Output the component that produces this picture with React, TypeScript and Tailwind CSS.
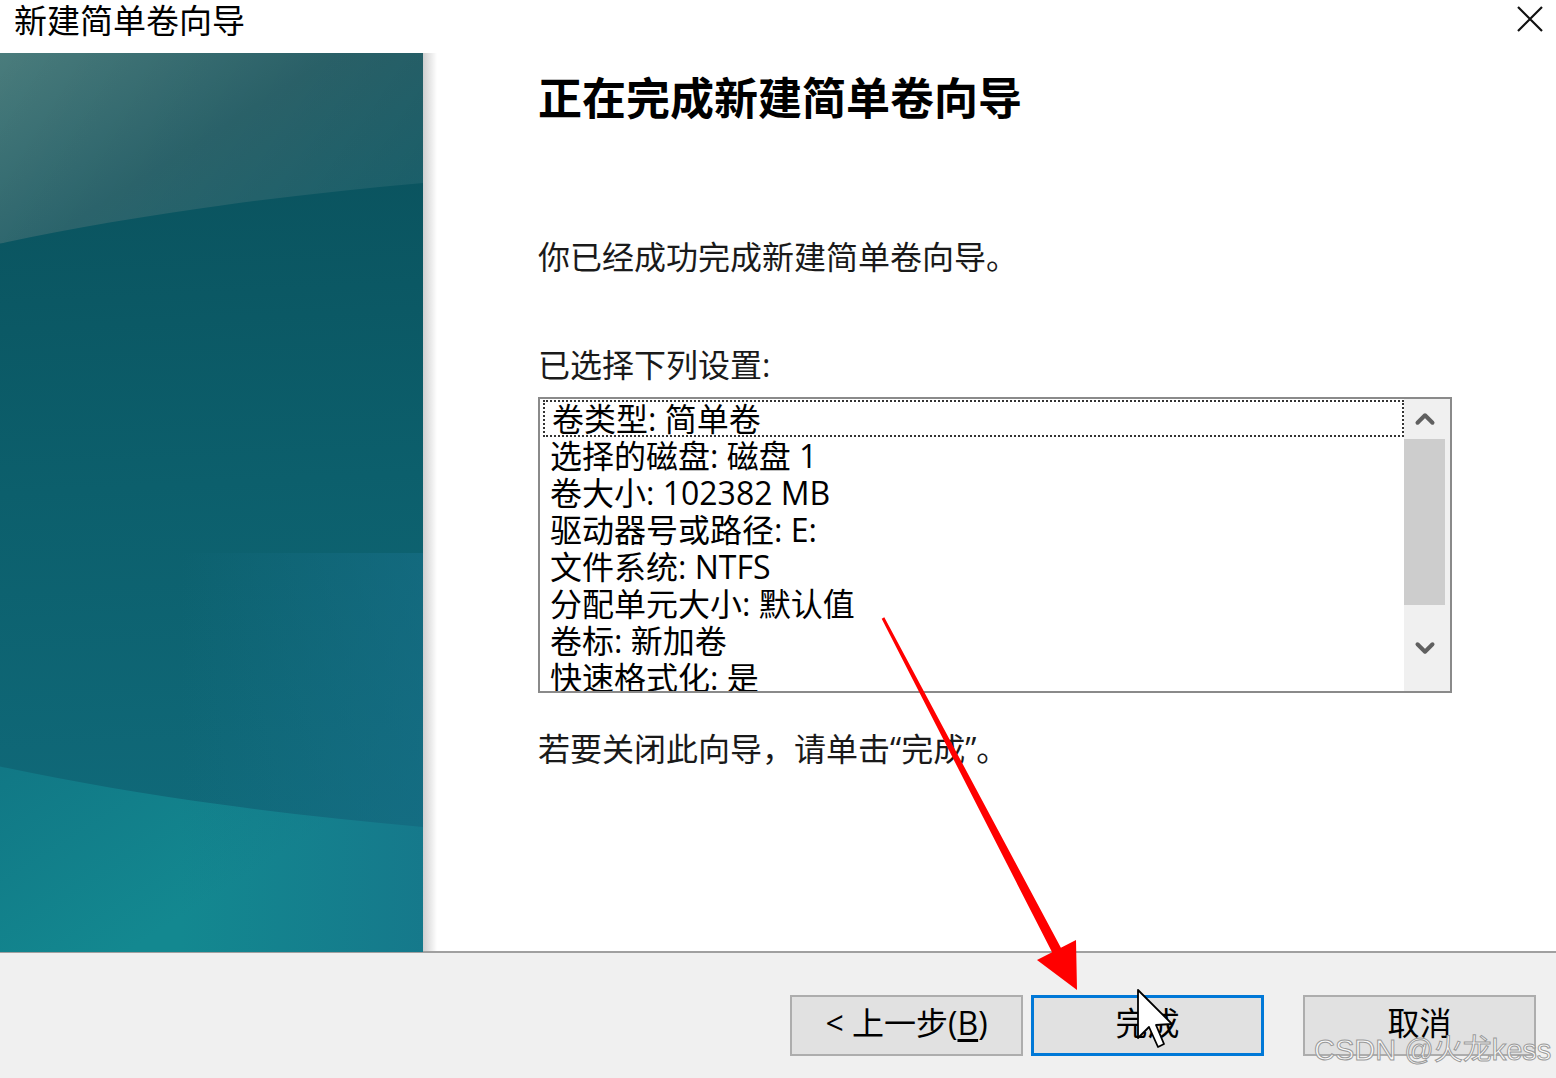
import { ChevronUp, ChevronDown } from "lucide-react";

const settings = [
  "卷类型: 简单卷",
  "选择的磁盘: 磁盘 1",
  "卷大小: 102382 MB",
  "驱动器号或路径: E:",
  "文件系统: NTFS",
  "分配单元大小: 默认值",
  "卷标: 新加卷",
  "快速格式化: 是",
];

function SidePanel() {
  return (
    <div className="flex h-full shrink-0">
      <svg width="423" height="899" viewBox="0 0 423 899" className="block">
        <defs>
          <linearGradient id="bg" x1="0" y1="0" x2="0.3" y2="1">
            <stop offset="0" stopColor="#4a7c7c" />
            <stop offset="0.22" stopColor="#2d6870" />
            <stop offset="0.6" stopColor="#107080" />
            <stop offset="1" stopColor="#138890" />
          </linearGradient>
          <linearGradient id="topShade" x1="0" y1="0" x2="1" y2="0.4">
            <stop offset="0" stopColor="#000" stopOpacity="0" />
            <stop offset="1" stopColor="#000" stopOpacity="0.12" />
          </linearGradient>
          <linearGradient id="ell" x1="0" y1="0" x2="0.2" y2="1">
            <stop offset="0" stopColor="#0a525d" />
            <stop offset="0.5" stopColor="#0c5f6c" />
            <stop offset="1" stopColor="#106a7a" />
          </linearGradient>
          <linearGradient id="right" x1="0" y1="0" x2="1" y2="0">
            <stop offset="0" stopColor="#176f88" stopOpacity="0" />
            <stop offset="1" stopColor="#176f88" stopOpacity="0.6" />
          </linearGradient>
        </defs>
        <rect width="423" height="899" fill="url(#bg)" />
        <rect width="423" height="260" fill="url(#topShade)" />
        <ellipse cx="850" cy="452" rx="1330" ry="340" fill="url(#ell)" />
        <rect x="180" y="500" width="243" height="399" fill="url(#right)" />
      </svg>
      <div className="w-[14px] h-full bg-gradient-to-r from-[#cfcfcf] to-white" />
    </div>
  );
}

function ListBox() {
  return (
    <div className="w-[914px] h-[296px] border-2 border-[#8a8a8a] bg-white flex">
      <div className="flex-1 overflow-hidden pl-[3px] pt-px">
        {settings.map((s, i) => (
          <div
            key={i}
            className={
              "h-[37px] flex items-center pl-[7px] text-[32px] leading-[37px] whitespace-nowrap text-black " +
              (i === 0 ? "border-2 border-dotted border-[#333] pl-[5px]" : "")
            }
          >
            <span className="-mt-px">{s}</span>
          </div>
        ))}
      </div>
      <div className="w-[46px] h-full bg-[#f0f0f0] flex flex-col">
        <div className="h-[40px] flex items-center justify-center pr-[5px]">
          <ChevronUp size={30} strokeWidth={3.2} className="text-[#606060]" />
        </div>
        <div className="h-[166px] w-[41px] bg-[#cdcdcd]" />
        <div className="flex-1 flex items-center justify-center pr-[5px]">
          <ChevronDown size={30} strokeWidth={3.2} className="text-[#606060]" />
        </div>
      </div>
    </div>
  );
}

function Btn({ label, primary }: { label: React.ReactNode; primary?: boolean }) {
  return (
    <div
      className={
        "w-[233px] h-[61px] bg-[#e1e1e1] flex items-center justify-center text-[32px] leading-[40px] text-black " +
        (primary ? "border-[3px] border-[#0078d7]" : "border-2 border-[#adadad]")
      }
    >
      <span className="-mt-[5px]">{label}</span>
    </div>
  );
}

export default function App() {
  return (
    <div className="relative w-[1556px] h-[1078px] bg-white overflow-hidden font-['Open_Sans','Noto_Sans_CJK_SC',sans-serif] text-[#1a1a1a]">
      {/* title bar */}
      <div className="h-[53px] flex items-start justify-between pl-[14px] pr-[10px]">
        <div className="text-[33px] leading-[42px] text-black">新建简单卷向导</div>
        <svg width="32" height="32" viewBox="0 0 32 32" className="mt-[3px]">
          <path d="M4 4 L28 28 M28 4 L4 28" stroke="#111" strokeWidth="2.2" />
        </svg>
      </div>

      {/* body */}
      <div className="h-[898px] flex">
        <SidePanel />
        <div className="flex-1 pl-[101px]">
          <div className="mt-[21px] text-[44px] leading-[44px] font-bold text-black font-['Noto_Sans_CJK_SC',sans-serif]">
            正在完成新建简单卷向导
          </div>
          <div className="mt-[123px] text-[32px] leading-[32px]">你已经成功完成新建简单卷向导。</div>
          <div className="mt-[76px] text-[32px] leading-[32px]">已选择下列设置:</div>
          <div className="mt-[16px]">
            <ListBox />
          </div>
          <div className="mt-[40px] text-[32px] leading-[32px]">若要关闭此向导，请单击“完成”。</div>
        </div>
      </div>

      {/* bottom bar */}
      <div className="border-t-2 border-[#a0a0a0] h-[127px] bg-[#f0f0f0] flex justify-end items-start pt-[42px] pr-[20px]">
        <Btn
          label={
            <span>
              &lt; 上一步(<span className="underline underline-offset-4">B</span>)
            </span>
          }
        />
        <div className="w-[8px]" />
        <Btn label="完成" primary />
        <div className="w-[39px]" />
        <Btn label="取消" />
      </div>

      {/* red arrow annotation and pointer */}
      <svg className="absolute inset-0 pointer-events-none" width="1556" height="1078">
        <polygon
          points="881.7,618.7 884.3,617.3 1060.9,947.7 1076,940 1077,990 1037,960 1052.1,952.3"
          fill="#ff0000"
        />
        <path
          d="M1138 990 L1138 1038 L1149 1027 L1158 1047 L1164 1044 L1156 1025 L1172 1024 Z"
          fill="#fff"
          stroke="#000"
          strokeWidth="1.8"
          strokeLinejoin="round"
        />
      </svg>

      {/* watermark */}
      <div className="absolute left-[1314px] top-[1030px] text-[29px] leading-[40px] font-['Liberation_Sans','Noto_Sans_CJK_SC',sans-serif] text-white/80 [-webkit-text-stroke:1px_#9a9a9a] whitespace-nowrap">
        CSDN @火龙kess
      </div>
    </div>
  );
}
